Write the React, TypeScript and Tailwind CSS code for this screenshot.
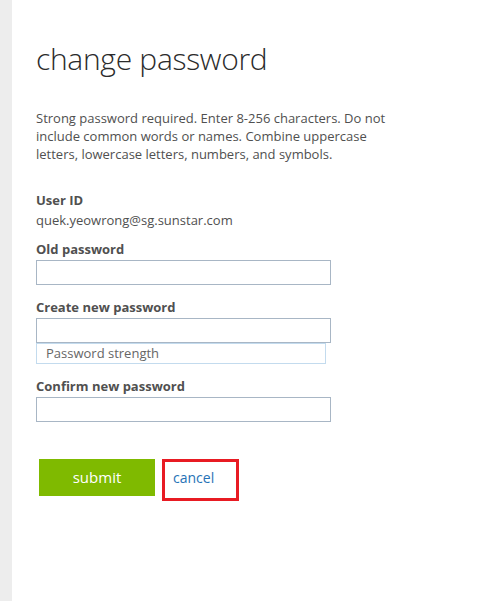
import React from "react";

const Field: React.FC<{ label: string; children?: React.ReactNode }> = ({ label, children }) => (
  <div className="flex flex-col">
    <label className="text-[13px] font-bold leading-[18px] text-[#505050]">{label}</label>
    <input
      type="password"
      className="mt-[2px] h-[25px] w-[295px] border border-[#a8b6c5] bg-white px-2 text-[13px] outline-none"
    />
    {children}
  </div>
);

export default function App() {
  return (
    <div
      className="flex min-h-[601px] w-full bg-white"
      style={{ fontFamily: '"Open Sans", "Noto Sans", sans-serif' }}
    >
      <div className="w-[12px] shrink-0 bg-[#ededed]" />
      <main className="flex flex-col pl-[24px] pt-[39px]">
        <h1 className="text-[30px] font-light leading-[40px] tracking-[-0.3px] text-[#2b2b2b]">
          change password
        </h1>
        <p className="mt-[30px] w-[370px] text-[13px] leading-[18px] text-[#505050]">
          Strong password required. Enter 8-256 characters. Do not include common words or names. Combine uppercase
          letters, lowercase letters, numbers, and symbols.
        </p>

        <div className="mt-[28px] flex flex-col">
          <span className="text-[13px] font-bold leading-[18px] text-[#505050]">User ID</span>
          <span className="mt-[2px] text-[13px] leading-[18px] text-[#505050]">quek.yeowrong@sg.sunstar.com</span>
        </div>

        <div className="mt-[11px] flex flex-col gap-[13px]">
          <Field label="Old password" />
          <Field label="Create new password">
            <div className="flex h-[21px] w-[290px] items-center border border-[#c3dbee] pl-[9px] text-[13px] text-[#666666]">
              Password strength
            </div>
          </Field>
          <Field label="Confirm new password" />
        </div>

        <div className="mt-[37px] flex items-start gap-[7px] pl-[3px]">
          <button className="h-[37px] w-[116px] bg-[#7fba00] text-[15px] text-white">submit</button>
          <div className="flex h-[42px] w-[77px] items-start border-[3px] border-[#e81b23] pl-[8px] pt-[6px]">
            <a href="#" className="text-[14px] leading-[20px] text-[#2672b6]">
              cancel
            </a>
          </div>
        </div>
      </main>
    </div>
  );
}
